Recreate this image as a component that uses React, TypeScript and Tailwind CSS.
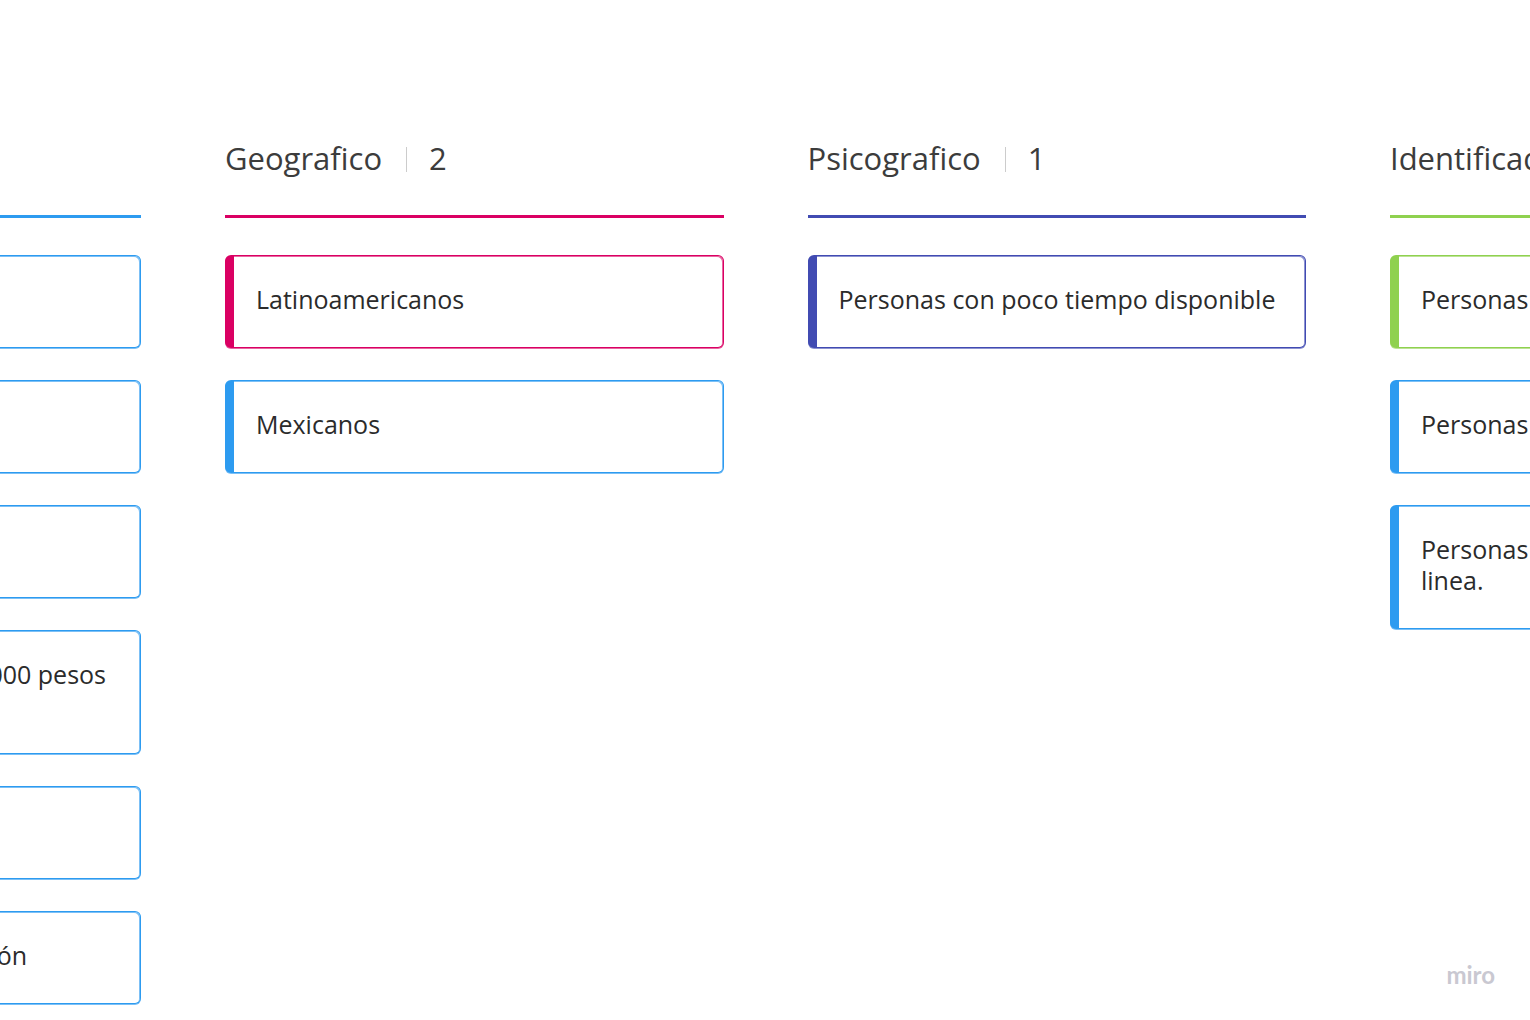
type Tone = "blue" | "pink" | "indigo" | "green";

const cardTone: Record<Tone, string> = {
  blue: "border-[#2d9bf0] shadow-[inset_-1px_1px_0_#7cc0f6,0_1px_0_#7cc0f6]",
  pink: "border-[#da0063] shadow-[inset_-1px_1px_0_#e966a1,0_1px_0_#e966a1]",
  indigo: "border-[#414bb2] shadow-[inset_-1px_1px_0_#8d93d1,0_1px_0_#8d93d1]",
  green: "border-[#8fd14f] shadow-[inset_-1px_1px_0_#bce395,0_1px_0_#bce395]",
};

const ruleTone: Record<Tone, string> = {
  blue: "border-[#2d9bf0]",
  pink: "border-[#da0063]",
  indigo: "border-[#414bb2]",
  green: "border-[#8fd14f]",
};

type CardData = { lines: string[]; tone: Tone };

function Heading({ title, count, tone }: { title?: string; count?: number; tone: Tone }) {
  return (
    <header className={`flex h-[81px] items-start border-b-3 ${ruleTone[tone]}`}>
      {title && (
        <h2 className="text-[31px] leading-[42px] whitespace-nowrap text-[#3c3c3c]">{title}</h2>
      )}
      {count !== undefined && (
        <>
          <span className="mt-[10px] ml-6 h-[25px] w-px shrink-0 bg-[#cccccc]" />
          <span className="ml-[22px] text-[31px] leading-[42px] text-[#3c3c3c]">{count}</span>
        </>
      )}
    </header>
  );
}

function Card({ lines, tone }: CardData) {
  return (
    <li
      className={`rounded-md border border-l-[9px] bg-white pt-[28px] pb-[32px] pl-[22px] text-[25px] leading-[31px] whitespace-nowrap text-[#2b2b2b] ${cardTone[tone]}`}
    >
      {lines.map((line) => (
        <p key={line}>{line}</p>
      ))}
    </li>
  );
}

type ColumnProps = { title: string; count?: number; tone: Tone; cards: CardData[]; bleed?: boolean };

function Column({ title, count, tone, cards, bleed }: ColumnProps) {
  return (
    <section className={bleed ? "-mr-10 min-w-0" : "min-w-0"}>
      <Heading title={title} count={count} tone={tone} />
      <ul className="mt-[37px] flex flex-col gap-8">
        {cards.map((card, i) => (
          <Card key={i} {...card} />
        ))}
      </ul>
    </section>
  );
}

const leadingCards = [
  { text: "", size: "h-[93px] pr-[34px]" },
  { text: "", size: "h-[93px] pr-[34px]" },
  { text: "", size: "h-[93px] pr-[34px]" },
  { text: "000 pesos", size: "h-[124px] pr-[34px]" },
  { text: "", size: "h-[93px] pr-[34px]" },
  { text: "ón", size: "h-[93px] pr-[113px]" },
];

function LeadingColumn() {
  return (
    <section className="min-w-0">
      <Heading tone="blue" />
      <ul className="mt-[37px] flex flex-col gap-8">
        {leadingCards.map((card, i) => (
          <li
            key={i}
            className={`flex justify-end rounded-r-md border border-l-0 bg-white pt-[28px] text-[25px] leading-[31px] whitespace-nowrap text-[#2b2b2b] ${cardTone.blue} ${card.size}`}
          >
            {card.text}
          </li>
        ))}
      </ul>
    </section>
  );
}

export default function App() {
  return (
    <main className="relative min-h-screen overflow-hidden bg-white pt-[137px] font-['Open_Sans',sans-serif]">
      <div className="grid grid-cols-[141px_1fr_1fr_140px] gap-x-[84px]">
        <LeadingColumn />
        <Column
          title="Geografico"
          count={2}
          tone="pink"
          cards={[
            { lines: ["Latinoamericanos"], tone: "pink" },
            { lines: ["Mexicanos"], tone: "blue" },
          ]}
        />
        <Column
          title="Psicografico"
          count={1}
          tone="indigo"
          cards={[{ lines: ["Personas con poco tiempo disponible"], tone: "indigo" }]}
        />
        <Column
          title="Identificado"
          tone="green"
          bleed
          cards={[
            { lines: ["Personas"], tone: "green" },
            { lines: ["Personas"], tone: "blue" },
            { lines: ["Personas", "linea."], tone: "blue" },
          ]}
        />
      </div>
      <span className="absolute right-[35px] bottom-[30px] font-[Lato] text-[24px] leading-[30px] font-bold text-[#c9c8d1]">
        miro
      </span>
    </main>
  );
}
